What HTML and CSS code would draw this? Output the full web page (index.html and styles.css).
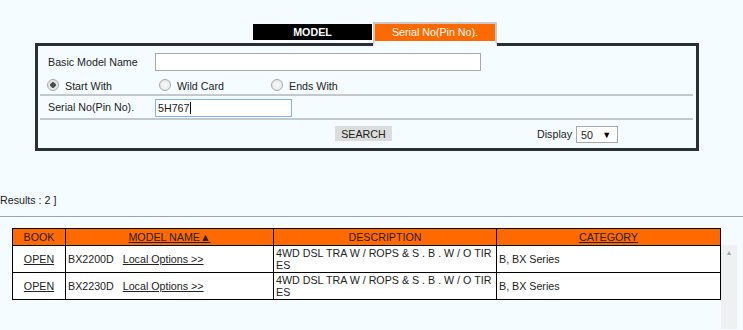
FILE: index.html
```html
<!DOCTYPE html>
<html lang="en">

<head>
    <meta charset="UTF-8">
    <meta name="viewport" content="width=device-width, initial-scale=1.0">
    <title>Parts Search</title>
    <link rel="stylesheet" href="styles.css">
</head>

<body>
    <div class="tabs">
        <div class="tab tab-model">MODEL</div>
        <div class="tab tab-serial">Serial No(Pin No).</div>
    </div>

    <div class="panel">
        <div class="field-row row-name">
            <span class="label">Basic Model Name</span>
            <input type="text" class="text-input name-input">
        </div>
        <div class="radio-row">
            <label class="radio-item"><input type="radio" name="match" checked><span>Start With</span></label>
            <label class="radio-item"><input type="radio" name="match"><span>Wild Card</span></label>
            <label class="radio-item"><input type="radio" name="match"><span>Ends With</span></label>
        </div>
        <div class="separator"></div>
        <div class="field-row row-serial">
            <span class="label">Serial No(Pin No).</span>
            <div class="text-input serial-input">5H767<span class="caret"></span></div>
        </div>
        <div class="separator"></div>
        <div class="search-row">
            <button class="search-btn">SEARCH</button>
            <span class="display-label">Display</span>
            <div class="select"><span>50</span><span class="arrow">&#9660;</span></div>
        </div>
    </div>

    <p class="results-count">Results : 2 ]</p>
    <hr class="rule">

    <div class="results">
        <table class="result-table">
            <colgroup>
                <col class="col-book">
                <col class="col-model">
                <col class="col-desc">
                <col class="col-cat">
            </colgroup>
            <thead>
                <tr>
                    <th>BOOK</th>
                    <th><a href="#">MODEL NAME&#9650;</a></th>
                    <th>DESCRIPTION</th>
                    <th><a href="#">CATEGORY</a></th>
                </tr>
            </thead>
            <tbody>
                <tr>
                    <td class="book"><a href="#">OPEN</a></td>
                    <td>BX2200D <a href="#" class="options">Local Options &gt;&gt;</a></td>
                    <td class="desc">4WD DSL TRA W / ROPS &amp; S . B . W / O TIRES</td>
                    <td>B, BX Series</td>
                </tr>
                <tr>
                    <td class="book"><a href="#">OPEN</a></td>
                    <td>BX2230D <a href="#" class="options">Local Options &gt;&gt;</a></td>
                    <td class="desc">4WD DSL TRA W / ROPS &amp; S . B . W / O TIRES</td>
                    <td>B, BX Series</td>
                </tr>
            </tbody>
        </table>
        <div class="scrollbar"><span class="scroll-up">&#9650;</span></div>
    </div>
</body>

</html>
```

FILE: styles.css
```css
body {
    margin: 0;
    background-color: #f5fcff;
    font-family: 'Liberation Sans', Arial, sans-serif;
    font-size: 10.7px;
    color: #222;
    overflow: hidden;
}

/* tabs above the search panel */
.tabs {
    display: flex;
    align-items: flex-start;
    margin: 0 0 -3px 253px;
    padding-top: 22px;
}

.tab {
    width: 119px;
    text-align: center;
    color: #fff;
}

.tab-model {
    margin-top: 2px;
    height: 16px;
    line-height: 16px;
    background-color: #000;
    font-weight: bold;
}

.tab-serial {
    position: relative;
    margin-left: 1px;
    width: 120px;
    height: 17px;
    line-height: 17px;
    background-color: #ff6a00;
    border: 2px solid #c9c9c9;
    border-bottom: 5px solid #f5fcff;
}

/* search panel */
.panel {
    margin-left: 35px;
    width: 664px;
    box-sizing: border-box;
    border: 3px solid #2b2f33;
}

.field-row {
    display: flex;
    align-items: center;
}

.label {
    width: 107px;
    padding-left: 10px;
}

.text-input {
    box-sizing: border-box;
    height: 18px;
    margin: 0;
    border: 1px solid #a9a9a9;
    background: #fff;
    font-family: inherit;
    font-size: 10.7px;
}

.row-name {
    padding-top: 7px;
}

.name-input {
    width: 326px;
}

.radio-row {
    display: flex;
    height: 23px;
    padding-left: 9px;
}

.radio-item {
    display: flex;
    width: 112px;
}

.radio-item input {
    appearance: none;
    box-sizing: border-box;
    width: 12px;
    height: 12px;
    margin: 8px 6px 0 0;
    border: 1px solid #a8a8a8;
    border-radius: 50%;
    background: radial-gradient(circle, #fafafa 0, #e4e4e4 100%);
}

.radio-item input:checked {
    background: radial-gradient(circle, #4d4d4d 0, #4d4d4d 2.5px, #e6e6e6 3px);
}

.radio-item span {
    margin-top: 9px;
}

.separator {
    margin: 0 3px 0 2px;
    border-top: 2px solid #c4c8ca;
}

.row-serial {
    height: 22px;
}

.serial-input {
    width: 137px;
    border-color: #7eb4ea;
    padding: 2px 0 0 2px;
    margin-top: 1px;
}

.caret {
    display: inline-block;
    width: 1px;
    height: 12px;
    background: #000;
    vertical-align: -2px;
}

.search-row {
    display: flex;
    align-items: flex-start;
    height: 28px;
    padding-left: 297px;
}

.search-btn {
    margin-top: 6px;
    width: 57px;
    height: 15px;
    padding: 0;
    border: none;
    background-color: #dcdcdc;
    font-family: inherit;
    font-size: 10.7px;
    color: #222;
}

.display-label {
    margin: 8px 0 0 145px;
}

.select {
    display: flex;
    justify-content: space-between;
    box-sizing: border-box;
    width: 42px;
    height: 17px;
    margin: 6px 0 0 4px;
    padding: 2px 6px 0 4px;
    border: 1px solid #a9a9a9;
    background: #fff;
}

.select .arrow {
    font-size: 9px;
    line-height: 12px;
    color: #000;
}

/* results */
.results-count {
    margin: 43px 0 0 0;
    line-height: 13px;
}

.rule {
    margin: 9px 0 0 0;
    border: none;
    border-top: 1px solid #a3a3a3;
}

.results {
    display: flex;
    align-items: flex-start;
    margin: 11px 0 0 12px;
}

.result-table {
    width: 708px;
    border-collapse: collapse;
    table-layout: fixed;
}

.col-book {
    width: 53px;
}

.col-model {
    width: 208px;
}

.col-desc {
    width: 223px;
}

.col-cat {
    width: 224px;
}

th,
td {
    border: 1px solid #000;
    padding: 0 2px;
}

th {
    height: 16px;
    background-color: #ff6a00;
    font-weight: normal;
    color: #2a1a10;
    text-align: center;
}

td {
    height: 25px;
    background-color: #fff;
}

a {
    color: #222;
}

.book {
    text-align: center;
}

.options {
    margin-left: 6px;
}

.desc {
    word-break: break-all;
    line-height: 12px;
    vertical-align: top;
    padding-top: 1px;
}

.scrollbar {
    width: 16px;
    height: 84px;
    margin-top: 17px;
    background-color: #eef0f1;
    text-align: center;
}

.scroll-up {
    font-size: 7px;
    color: #a3a3a3;
}
```
